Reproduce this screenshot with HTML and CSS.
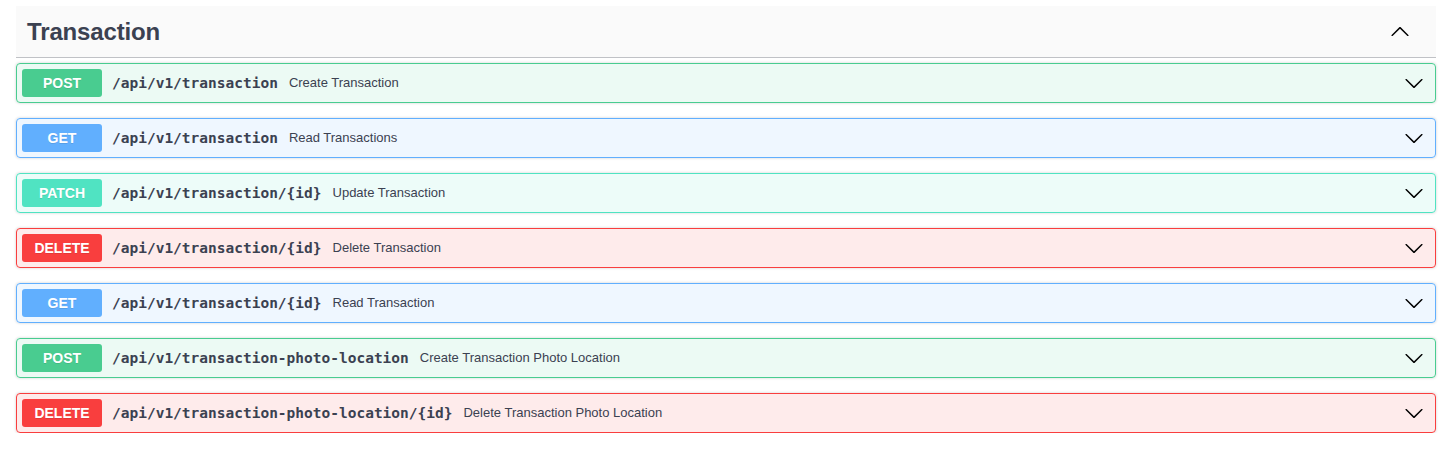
FILE: index.html
```html
<!DOCTYPE html>
<html>
<head>
<meta charset="utf-8">
<link rel="stylesheet" href="styles.css">
</head>
<body>
<div class="wrapper">
  <section class="tag-section">
    <h3 class="tag">
      <span class="tag-name">Transaction</span>
      <svg class="arrow arrow-up" viewBox="0 0 20 20" width="20" height="20"><path d="M17.418 6.109c.272-.268.709-.268.979 0s.271.701 0 .969l-7.908 7.83c-.27.268-.707.268-.979 0l-7.908-7.83c-.27-.268-.27-.701 0-.969.271-.268.709-.268.979 0L10 13.25l7.418-7.141z"/></svg>
    </h3>
    <div class="ops">
      <div class="op op-post">
        <span class="method">POST</span>
        <span class="path">/api/v1/transaction</span>
        <span class="desc">Create Transaction</span>
        <svg class="arrow" viewBox="0 0 20 20" width="20" height="20"><path d="M17.418 6.109c.272-.268.709-.268.979 0s.271.701 0 .969l-7.908 7.83c-.27.268-.707.268-.979 0l-7.908-7.83c-.27-.268-.27-.701 0-.969.271-.268.709-.268.979 0L10 13.25l7.418-7.141z"/></svg>
      </div>
      <div class="op op-get">
        <span class="method">GET</span>
        <span class="path">/api/v1/transaction</span>
        <span class="desc">Read Transactions</span>
        <svg class="arrow" viewBox="0 0 20 20" width="20" height="20"><path d="M17.418 6.109c.272-.268.709-.268.979 0s.271.701 0 .969l-7.908 7.83c-.27.268-.707.268-.979 0l-7.908-7.83c-.27-.268-.27-.701 0-.969.271-.268.709-.268.979 0L10 13.25l7.418-7.141z"/></svg>
      </div>
      <div class="op op-patch">
        <span class="method">PATCH</span>
        <span class="path">/api/v1/transaction/{id}</span>
        <span class="desc">Update Transaction</span>
        <svg class="arrow" viewBox="0 0 20 20" width="20" height="20"><path d="M17.418 6.109c.272-.268.709-.268.979 0s.271.701 0 .969l-7.908 7.83c-.27.268-.707.268-.979 0l-7.908-7.83c-.27-.268-.27-.701 0-.969.271-.268.709-.268.979 0L10 13.25l7.418-7.141z"/></svg>
      </div>
      <div class="op op-delete">
        <span class="method">DELETE</span>
        <span class="path">/api/v1/transaction/{id}</span>
        <span class="desc">Delete Transaction</span>
        <svg class="arrow" viewBox="0 0 20 20" width="20" height="20"><path d="M17.418 6.109c.272-.268.709-.268.979 0s.271.701 0 .969l-7.908 7.83c-.27.268-.707.268-.979 0l-7.908-7.83c-.27-.268-.27-.701 0-.969.271-.268.709-.268.979 0L10 13.25l7.418-7.141z"/></svg>
      </div>
      <div class="op op-get">
        <span class="method">GET</span>
        <span class="path">/api/v1/transaction/{id}</span>
        <span class="desc">Read Transaction</span>
        <svg class="arrow" viewBox="0 0 20 20" width="20" height="20"><path d="M17.418 6.109c.272-.268.709-.268.979 0s.271.701 0 .969l-7.908 7.83c-.27.268-.707.268-.979 0l-7.908-7.83c-.27-.268-.27-.701 0-.969.271-.268.709-.268.979 0L10 13.25l7.418-7.141z"/></svg>
      </div>
      <div class="op op-post">
        <span class="method">POST</span>
        <span class="path">/api/v1/transaction-photo-location</span>
        <span class="desc">Create Transaction Photo Location</span>
        <svg class="arrow" viewBox="0 0 20 20" width="20" height="20"><path d="M17.418 6.109c.272-.268.709-.268.979 0s.271.701 0 .969l-7.908 7.83c-.27.268-.707.268-.979 0l-7.908-7.83c-.27-.268-.27-.701 0-.969.271-.268.709-.268.979 0L10 13.25l7.418-7.141z"/></svg>
      </div>
      <div class="op op-delete">
        <span class="method">DELETE</span>
        <span class="path">/api/v1/transaction-photo-location/{id}</span>
        <span class="desc">Delete Transaction Photo Location</span>
        <svg class="arrow" viewBox="0 0 20 20" width="20" height="20"><path d="M17.418 6.109c.272-.268.709-.268.979 0s.271.701 0 .969l-7.908 7.83c-.27.268-.707.268-.979 0l-7.908-7.83c-.27-.268-.27-.701 0-.969.271-.268.709-.268.979 0L10 13.25l7.418-7.141z"/></svg>
      </div>
    </div>
  </section>
</div>
</body>
</html>
```
FILE: styles.css
```css
* { box-sizing: border-box; }
html, body { margin: 0; padding: 0; background: #fff; }
body { font-family: "Liberation Sans", Arial, sans-serif; color: #3b4151; }
.wrapper { padding: 6px 19px 0 16px; }

.tag {
  margin: 0 0 5px;
  display: flex;
  align-items: center;
  padding: 10px 26px 10px 11px;
  background: #fafafa;
  border-bottom: 1px solid rgba(59, 65, 81, 0.3);
  font-size: 24px;
  font-weight: 700;
  line-height: 31px;
  letter-spacing: -0.15px;
  color: #3b4151;
}
.tag-name { flex: 1; }

.arrow { flex: none; fill: #000; display: block; }
.arrow-up { transform: rotate(180deg); }

.ops { display: flex; flex-direction: column; gap: 15px; }

.op {
  display: flex;
  align-items: center;
  padding: 5px 11px 5px 5px;
  border: 1px solid;
  border-radius: 4px;
  box-shadow: 0 0 3px rgba(0, 0, 0, 0.19);
}
.op-post { background: rgba(73, 204, 144, 0.1); border-color: #49cc90; }
.op-get { background: rgba(97, 175, 254, 0.1); border-color: #61affe; }
.op-patch { background: rgba(80, 227, 194, 0.1); border-color: #50e3c2; }
.op-delete { background: rgba(249, 62, 62, 0.1); border-color: #f93e3e; }

.method {
  flex: none;
  width: 80px;
  height: 28px;
  line-height: 28px;
  text-align: center;
  border-radius: 3px;
  color: #fff;
  font-size: 14px;
  font-weight: 700;
  text-shadow: 0 1px 0 rgba(0, 0, 0, 0.1);
}
.op-post .method { background: #49cc90; }
.op-get .method { background: #61affe; }
.op-patch .method { background: #50e3c2; }
.op-delete .method { background: #f93e3e; }

.path {
  flex: none;
  padding: 0 11px 0 10px;
  font-family: "DejaVu Sans Mono", monospace;
  font-size: 14.5px;
  font-weight: 700;
  color: #3b4151;
}
.desc {
  flex: 1;
  font-size: 13px;
  line-height: 15px;
  padding-bottom: 1px;
  color: #3b4151;
}
```
